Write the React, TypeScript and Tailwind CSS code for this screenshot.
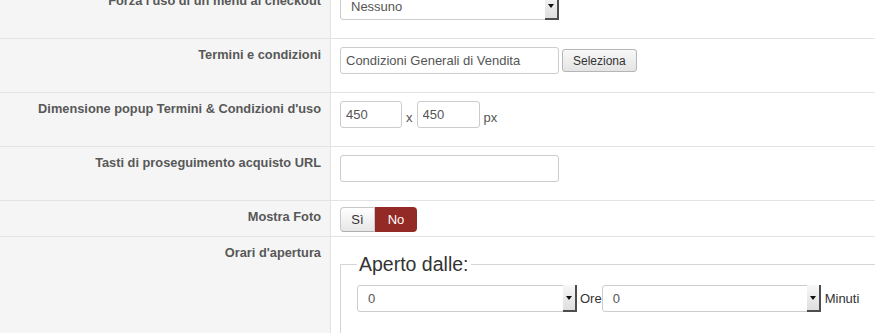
import type { ReactNode } from 'react'

function Row({ label, children, cell }: { label: string; children: ReactNode; cell: string }) {
  return (
    <div className="flex border-b border-[#e3e3e3]">
      <div className="w-[331px] shrink-0 border-r border-[#e3e3e3] bg-[#f5f5f5] pr-[9px] pt-[7px] text-right text-[12.8px] font-bold leading-[18px] text-[#585858]">
        {label}
      </div>
      <div className={`min-w-0 flex-1 pl-[9px] ${cell}`}>{children}</div>
    </div>
  )
}

function Select({ value, width }: { value: string; width: string }) {
  return (
    <div className={`flex h-[27px] ${width} rounded-l-[3px] border border-[#ccc] bg-white`}>
      <span className="flex-1 pl-[10px] text-[13px] leading-[25px] text-[#555]">{value}</span>
      <span className="-mr-px -mt-px -mb-px flex w-[14px] items-center justify-center border-r-2 border-b-2 border-[#4d4d4d] bg-linear-to-b from-[#f8f8f8] to-[#dedede]">
        <span className="h-0 w-0 border-x-[3px] border-t-[4px] border-x-transparent border-t-[#111]" />
      </span>
    </div>
  )
}

function TextInput({ value, width }: { value: string; width: string }) {
  return (
    <input
      readOnly
      value={value}
      className={`h-[27px] ${width} rounded-[3px] border border-[#ccc] bg-white pl-[5px] text-[13px] text-[#555] outline-none`}
    />
  )
}

export default function App() {
  return (
    <div className="h-[333px] overflow-hidden bg-white font-['Liberation_Sans',Arial,sans-serif]">
      <div className="-mt-[15px]">
        <Row label="Forza l'uso di un menu al checkout" cell="pt-2 pb-[18px]">
          <Select value="Nessuno" width="w-[219px]" />
        </Row>

        <Row label="Termini e condizioni" cell="pt-2 pb-[18px]">
          <div className="flex items-center gap-[3px]">
            <TextInput value="Condizioni Generali di Vendita" width="w-[219px]" />
            <button className="h-[23px] rounded-[3px] border border-[#b5b5b5] bg-linear-to-b from-[#f8f8f8] to-[#e4e4e4] px-[10px] text-[12px] text-[#333]">
              Seleziona
            </button>
          </div>
        </Row>

        <Row label="Dimensione popup Termini & Condizioni d'uso" cell="pt-2 pb-[18px]">
          <div className="flex items-center text-[13px] text-[#555]">
            <TextInput value="450" width="w-[62px]" />
            <span className="mx-[4px] mt-[6px]">x</span>
            <TextInput value="450" width="w-[63px]" />
            <span className="ml-[4px] mt-[6px]">px</span>
          </div>
        </Row>

        <Row label="Tasti di proseguimento acquisto URL" cell="pt-2 pb-[18px]">
          <TextInput value="" width="w-[219px]" />
        </Row>

        <Row label="Mostra Foto" cell="pt-[6px] pb-[4px]">
          <div className="flex h-[25px] text-[13px]">
            <span className="flex w-[35px] items-center justify-center rounded-l-[4px] border border-[#c8c8c8] border-b-[#b0b0b0] bg-linear-to-b from-white to-[#e6e6e6] text-[#333]">
              Sì
            </span>
            <span className="flex w-[42px] items-center justify-center rounded-r-[4px] bg-[#942a25] text-white">
              No
            </span>
          </div>
        </Row>

        <Row label="Orari d'apertura" cell="pt-[15px] h-[200px]">
          <fieldset className="-mr-10 h-[120px] border border-[#d5d5d5] pl-4">
            <legend className="px-[2px] text-[19.5px] leading-[24px] text-[#333]">Aperto dalle:</legend>
            <div className="mt-[9px] flex items-center text-[13px] text-[#333]">
              <Select value="0" width="w-[220px]" />
              <span className="ml-[3px]">Ore</span>
              <Select value="0" width="w-[219px]" />
              <span className="ml-[4px]">Minuti</span>
            </div>
          </fieldset>
        </Row>
      </div>
    </div>
  )
}
